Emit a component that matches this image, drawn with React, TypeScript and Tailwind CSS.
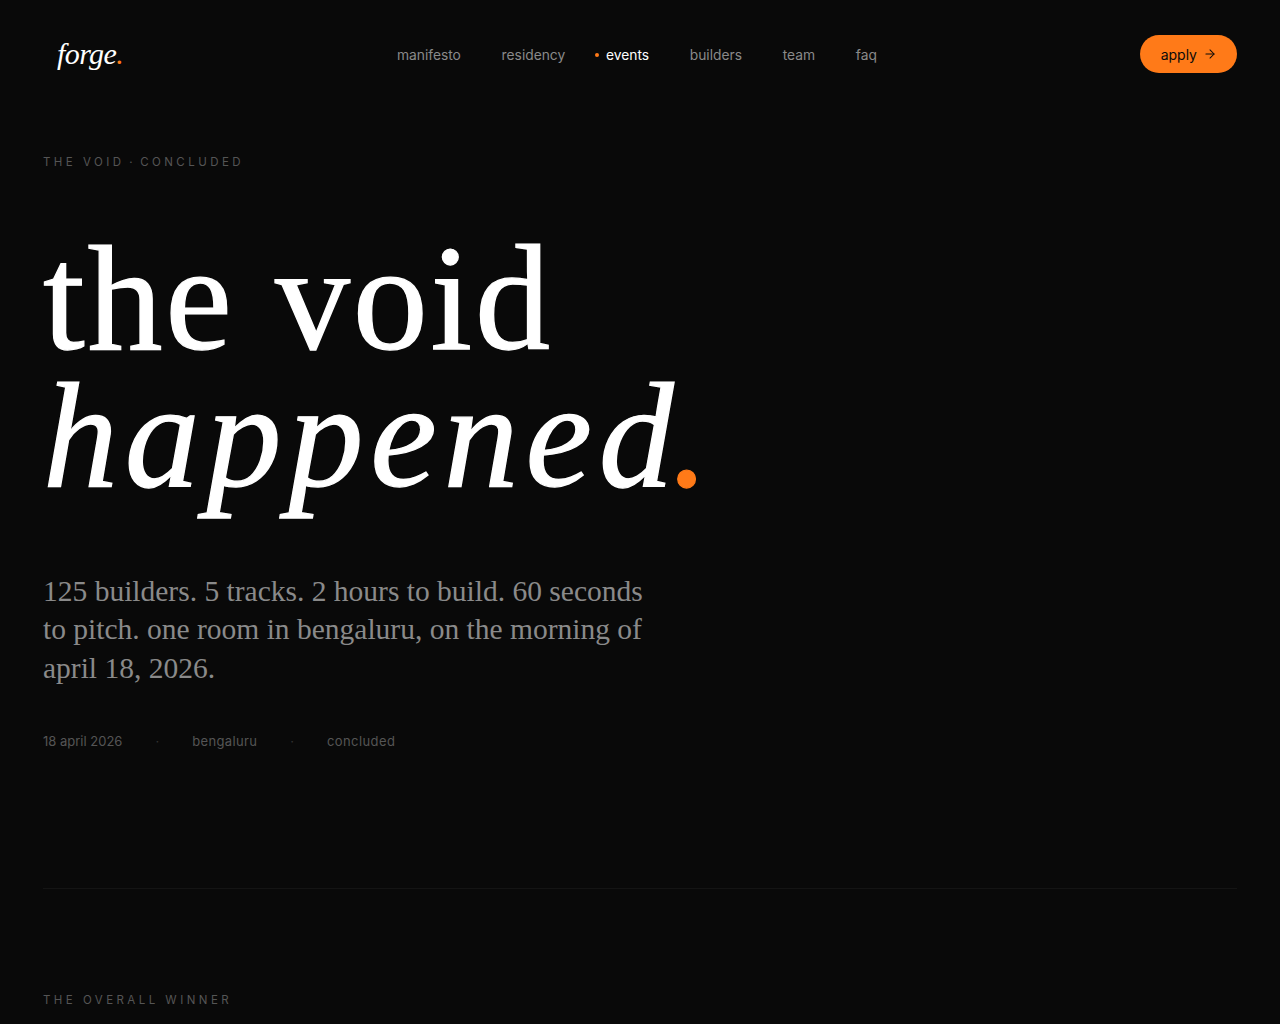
import React from 'react';
import { ArrowRight } from 'lucide-react';

const navLinks = ['manifesto', 'residency', 'events', 'builders', 'team', 'faq'];

const Nav = () => (
  <header className="flex h-[108px] items-center justify-between pl-[57px] pr-[43px]">
    <div className="font-['Liberation_Serif',serif] text-[30px] italic leading-none tracking-[-0.02em] text-white">
      forge<span className="text-[#ff7a18]">.</span>
    </div>
    <nav className="ml-[11px] mt-[3px] flex items-center gap-[40.7px] text-[13.8px] text-[#8a8a8a]">
      {navLinks.map(link => (
        <a key={link} className={`relative ${link === 'events' ? 'text-white' : ''}`}>
          {link === 'events' && <span className="absolute left-[-11px] top-[8px] h-[4px] w-[4px] rounded-full bg-[#ff7a18]" />}
          {link}
        </a>
      ))}
    </nav>
    <button className="flex h-[38px] items-center gap-[6px] rounded-full bg-[#ff7a18] pl-[21px] pr-[20px] text-[14px] text-[#0a0a0a]">
      apply <ArrowRight size={14} strokeWidth={1.75} />
    </button>
  </header>
);

export default function App() {
  return (
    <div className="min-h-screen overflow-hidden bg-[#090909] font-['Inter',sans-serif] antialiased">
      <Nav />
      <main className="px-[43px]">
        <p className="mt-[47px] text-[11.5px] leading-[14px] tracking-[0.3em] text-[#555555]">
          THE VOID <span className="ml-[-2px] mr-px tracking-normal">·</span> CONCLUDED
        </p>
        <h1 className="mt-[61px] font-['Liberation_Serif',serif] text-[150px] leading-[137px] tracking-[2.8px] text-white [-webkit-text-stroke:1.25px_white]">
          the void
          <br />
          <span className="italic tracking-[6.8px]">
            happened<span className="ml-[-9px] text-[#ff7a18] [-webkit-text-stroke:1.25px_#ff7a18]">.</span>
          </span>
        </h1>
        <p className="mt-[68px] max-w-[620px] font-['Liberation_Serif',serif] text-[29.5px] leading-[38.4px] text-[#8a8a8a]">
          125 builders. 5 tracks. 2 hours to build. 60 seconds to pitch. one room in bengaluru, on the morning of april 18, 2026.
        </p>
        <div className="mt-[44px] flex items-center gap-[33px] text-[13px] leading-[20px] text-[#555555]">
          <span>18 april 2026</span>
          <span className="text-[#333333]">·</span>
          <span className="tracking-[0.35px]">bengaluru</span>
          <span className="text-[#333333]">·</span>
          <span className="tracking-[0.4px]">concluded</span>
        </div>
        <div className="mt-[137px] h-px bg-[#141414]" />
        <p className="mt-[104px] text-[11.5px] leading-[14px] tracking-[0.3em] text-[#555555]">THE OVERALL WINNER</p>
      </main>
    </div>
  );
}
